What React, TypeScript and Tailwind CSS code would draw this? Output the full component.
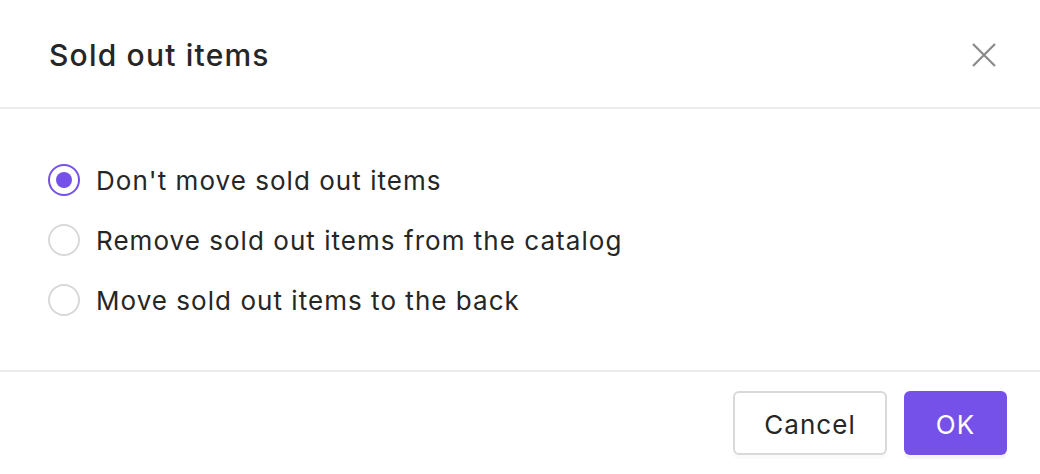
import React, { useState } from 'react';

const options = [
  "Don't move sold out items",
  'Remove sold out items from the catalog',
  'Move sold out items to the back',
];

export default function App() {
  const [selected, setSelected] = useState(0);

  return (
    <div className="w-[1040px] h-[474px] bg-white flex flex-col text-[#262626] font-['Inter',sans-serif]">
      {/* Header */}
      <div className="h-[109px] shrink-0 flex items-center justify-between pl-[49px] pr-[44px] border-b-2 border-[#ececec]">
        <h2 className="text-[30px] font-medium leading-none tracking-[0.04em] pt-[3px]">Sold out items</h2>
        <button className="w-[24px] h-[24px] flex items-center justify-center text-[#8a8a8a] mt-[2px]">
          <svg width="24" height="24" viewBox="0 0 24 24" fill="none" stroke="currentColor" strokeWidth="2.2">
            <path d="M1 1L23 23M23 1L1 23" />
          </svg>
        </button>
      </div>

      {/* Options */}
      <div className="flex-1 flex flex-col pt-[41px] pl-[48px]">
        {options.map((label, i) => (
          <label key={i} className="h-[60px] flex items-center gap-[16px] cursor-pointer" onClick={() => setSelected(i)}>
            <span
              className={
                selected === i
                  ? 'w-[32px] h-[32px] rounded-full border-2 border-[#7551e9] flex items-center justify-center'
                  : 'w-[32px] h-[32px] rounded-full border-2 border-[#d9d9d9]'
              }
            >
              {selected === i && <span className="w-[16px] h-[16px] rounded-full bg-[#7551e9]" />}
            </span>
            <span className="text-[26px] leading-none tracking-[0.04em] pt-[2px]">{label}</span>
          </label>
        ))}
      </div>

      {/* Footer */}
      <div className="h-[104px] shrink-0 border-t-2 border-[#ececec] flex justify-end items-start gap-[17px] pt-[19px] pr-[33px]">
        <button className="w-[154px] h-[64px] rounded-[6px] border-2 border-[#d9d9d9] bg-white text-[26px] leading-none tracking-[0.04em] pt-[4px] shadow-[0_4px_0_rgba(0,0,0,0.02)]">
          Cancel
        </button>
        <button className="w-[103px] h-[64px] rounded-[6px] bg-[#7551e9] text-white text-[26px] leading-none tracking-[0.04em] pt-[4px] shadow-[0_4px_0_rgba(0,0,0,0.04)]">
          OK
        </button>
      </div>
    </div>
  );
}
